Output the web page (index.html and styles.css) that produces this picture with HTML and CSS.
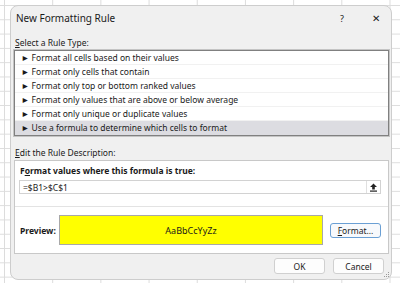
FILE: index.html
```html
<!DOCTYPE html>
<html lang="en">
<head>
    <meta charset="UTF-8">
    <title>New Formatting Rule</title>
    <link rel="stylesheet" href="styles.css">
</head>
<body>
    <div class="dialog">
        <div class="titlebar">
            <span class="title">New Formatting Rule</span>
            <span class="help">?</span>
            <span class="close">✕</span>
        </div>
        <div class="label"><u>S</u>elect a Rule Type:</div>
        <ul class="rule-list">
            <li>► Format all cells based on their values</li>
            <li>► Format only cells that contain</li>
            <li>► Format only top or bottom ranked values</li>
            <li>► Format only values that are above or below average</li>
            <li>► Format only unique or duplicate values</li>
            <li class="selected">► Use a formula to determine which cells to format</li>
        </ul>
        <div class="label label-edit"><u>E</u>dit the Rule Description:</div>
        <div class="panel">
            <div class="panel-head">F<u>o</u>rmat values where this formula is true:</div>
            <div class="formula">
                <span class="formula-text">=$B1&gt;$C$1</span>
                <span class="collapse">
                    <svg width="9" height="9" viewBox="0 0 9 9">
                        <polygon points="4.5,0.5 8,4 5.8,4 5.8,6.5 3.2,6.5 3.2,4 1,4" fill="#222"/>
                        <rect x="1" y="7.5" width="7" height="1.2" fill="#222"/>
                    </svg>
                </span>
            </div>
            <div class="preview-row">
                <span class="preview-label">Preview:</span>
                <div class="preview-box">AaBbCcYyZz</div>
                <button class="btn btn-format"><u>F</u>ormat...</button>
            </div>
        </div>
        <div class="actions">
            <button class="btn">OK</button>
            <button class="btn">Cancel</button>
        </div>
        <svg class="grip" width="6" height="6" viewBox="0 0 6 6">
            <rect x="4" y="0" width="1" height="1" fill="#9a9a9a"/>
            <rect x="2" y="2" width="1" height="1" fill="#9a9a9a"/>
            <rect x="4" y="2" width="1" height="1" fill="#9a9a9a"/>
            <rect x="0" y="4" width="1" height="1" fill="#9a9a9a"/>
            <rect x="2" y="4" width="1" height="1" fill="#9a9a9a"/>
            <rect x="4" y="4" width="1" height="1" fill="#9a9a9a"/>
        </svg>
    </div>
</body>
</html>
```

FILE: styles.css
```css
body {
    margin: 0;
    width: 400px;
    height: 283px;
    overflow: hidden;
    font-family: "Noto Sans", "Open Sans", sans-serif;
    font-size: 8.5px;
    color: #1a1a1a;
    background-color: #fff;
    background-image:
        linear-gradient(to right, #dcdcdc 1px, transparent 1px),
        linear-gradient(to bottom, #dcdcdc 1px, transparent 1px);
    background-size: 48.2px 14.3px;
    background-position: 4px 5px;
}
.dialog {
    position: relative;
    box-sizing: border-box;
    width: 382px;
    height: 275px;
    margin: 5px 0 0 10px;
    background: #f0f0f0;
    border: 1px solid #cdcdcd;
    border-radius: 8px;
    display: flex;
    flex-direction: column;
}
.titlebar {
    height: 24px;
    display: flex;
    align-items: center;
    padding-left: 5px;
}
.title {
    flex: 1;
    font-size: 10px;
}
.help {
    width: 14px;
    text-align: center;
    font-size: 9px;
    margin-right: 20px;
}
.close {
    width: 14px;
    text-align: center;
    font-size: 10px;
    margin-right: 8px;
}
.label {
    height: 14px;
    line-height: 14px;
    margin: 6px 0 0 4px;
}
.label-edit {
    margin-top: 10px;
}
.rule-list {
    list-style: none;
    margin: 0 0 0 3px;
    padding: 0;
    width: 375px;
    box-sizing: border-box;
    background: #fff;
    border: 1px solid #808080;
    box-shadow: 0 0 0 1px #c4c4c4;
}
.rule-list li {
    height: 14px;
    line-height: 13px;
    padding-left: 6px;
    border-bottom: 1px solid #f1f1f1;
    box-sizing: border-box;
}
.rule-list li.selected {
    background: #dcdce1;
    border-bottom: none;
}
.panel {
    margin-left: 3px;
    width: 375px;
    height: 94px;
    box-sizing: border-box;
    background: #fff;
    border: 1px solid #c8c8c8;
    display: flex;
    flex-direction: column;
}
.panel-head {
    font-weight: bold;
    height: 13px;
    line-height: 13px;
    margin: 3px 0 0 5px;
}
.formula {
    height: 14px;
    margin: 3px 7px 0 4px;
    box-sizing: border-box;
    border: 1px solid #d2d2d2;
    display: flex;
    align-items: center;
}
.formula-text {
    flex: 1;
    padding-left: 3px;
}
.collapse {
    width: 13px;
    height: 12px;
    border-left: 1px solid #e0e0e0;
    display: flex;
    align-items: center;
    justify-content: center;
}
.preview-row {
    margin-top: 12px;
    border-top: 1px solid #e3e3e3;
    flex: 1;
    display: flex;
    align-items: center;
    padding-left: 5px;
}
.preview-label {
    font-weight: bold;
    width: 39px;
}
.preview-box {
    width: 264px;
    height: 30px;
    box-sizing: border-box;
    background: #ffff00;
    border: 1px solid #a8a8a8;
    display: flex;
    align-items: center;
    justify-content: center;
    font-size: 9px;
}
.btn {
    font-family: inherit;
    font-size: 8.5px;
    color: #1a1a1a;
    background: #fdfdfd;
    border: 1px solid #d0d0d0;
    border-radius: 3px;
    width: 51px;
    height: 16px;
    padding: 0;
}
.btn-format {
    margin-left: 7px;
    height: 15px;
    border-color: #6a9fd4;
    background: #f7f9fc;
}
.actions {
    display: flex;
    justify-content: flex-end;
    gap: 8px;
    margin: 4px 7px 0 0;
}
.grip {
    position: absolute;
    right: 1px;
    bottom: 1px;
}
```
